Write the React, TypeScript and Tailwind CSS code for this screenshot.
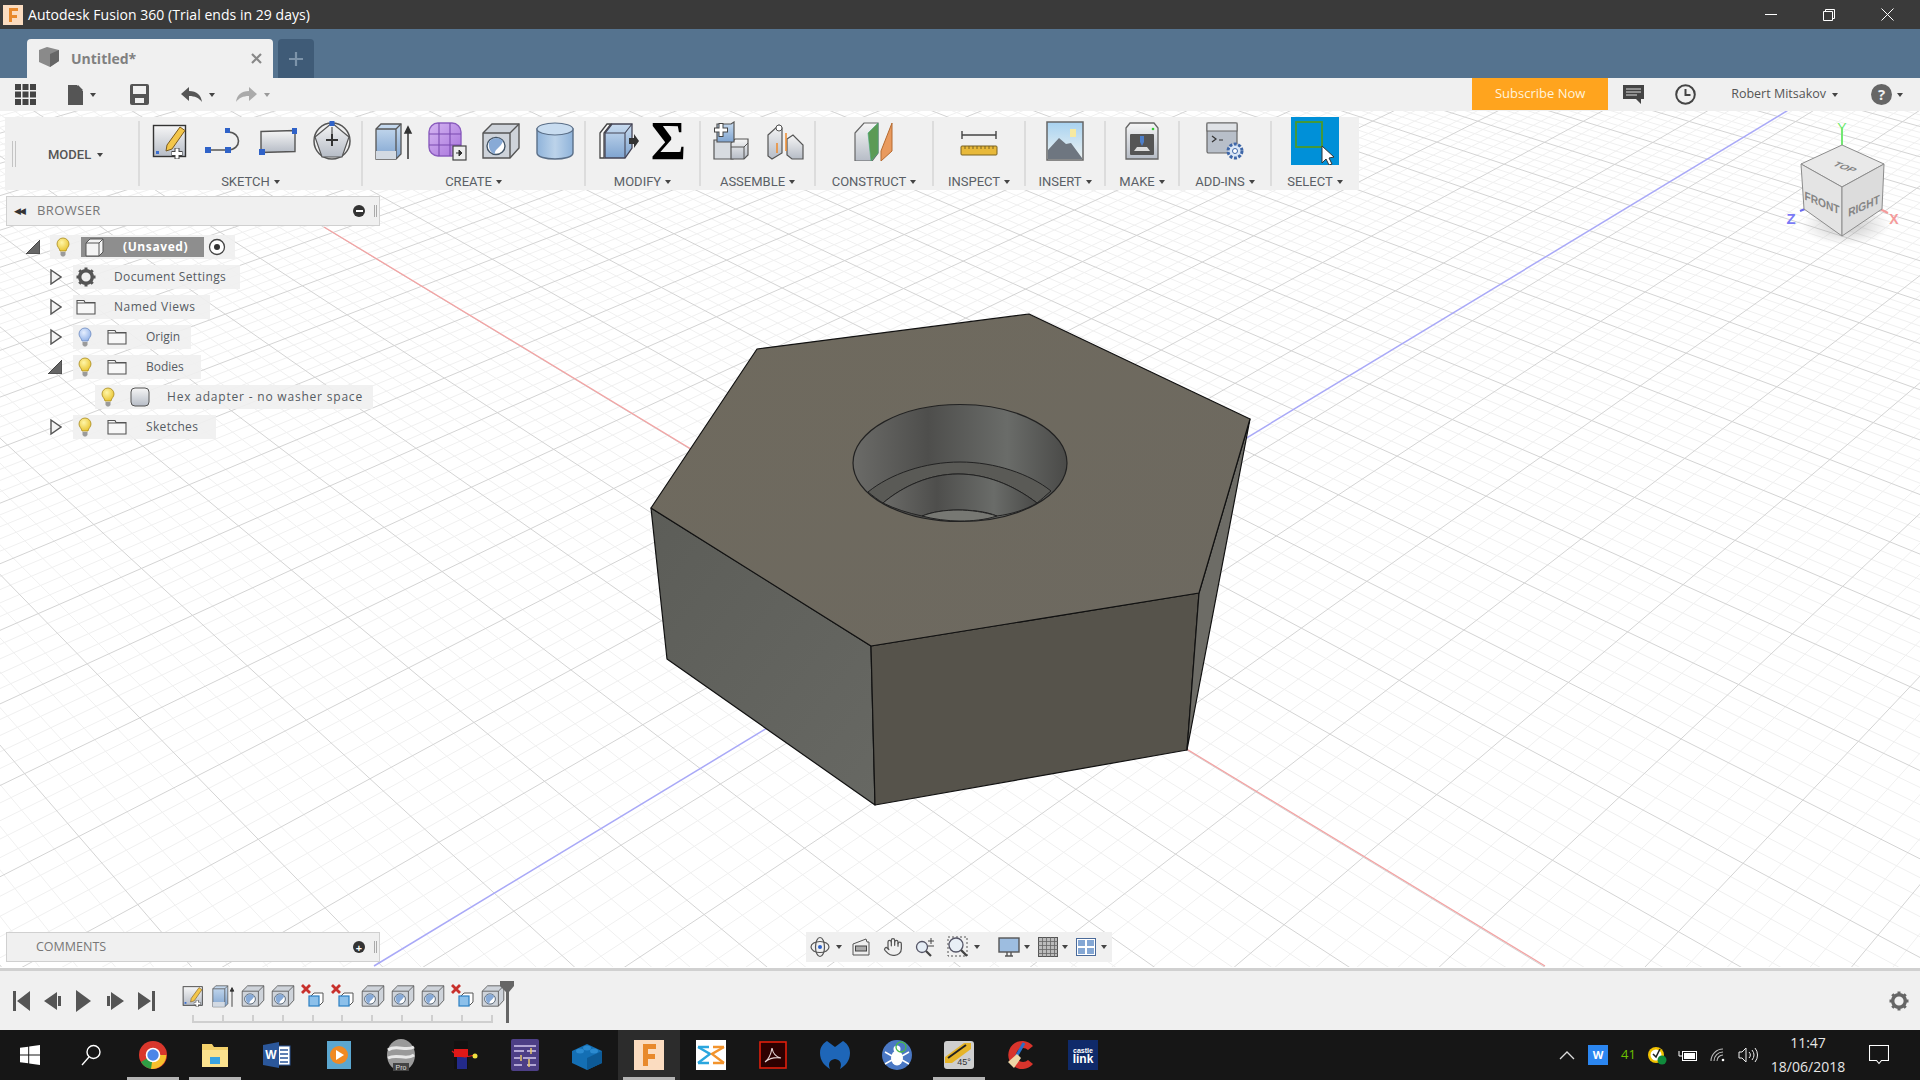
import { Hand } from "lucide-react";
import type { ReactNode } from "react";

// perspective grid: two pencils of lines through the vanishing points
const VPR = { x: -1295, y: -753 };
const VPB = { x: 3350, y: -835 };
const RED_O = { x: 955, y: 610 };
const L1 = { x: 471, y: 317 };

function gridLines() {
    const out: { d: string; major: boolean }[] = [];
    const far = (vp: { x: number; y: number }, x: number, y: number) => {
        const t = 40;
        return `M${vp.x} ${vp.y}L${vp.x + (x - vp.x) * t} ${vp.y + (y - vp.y) * t}`;
    };
    // blue direction, crossing the red axis
    for (let k = -150; k <= 300; k++) {
        const inv = 5.348e-4 + (k / 5) * 1.587e-5;
        if (inv <= 0.05e-4) continue;
        const x = VPR.x + 1 / inv;
        const y = VPR.y + ((RED_O.y - VPR.y) / (RED_O.x - VPR.x)) * (x - VPR.x);
        out.push({ d: far(VPB, x, y), major: k % 5 === 0 });
    }
    // red direction, crossing one known grid line
    for (let k = -50; k <= 300; k++) {
        const inv = 3.473e-4 + (k / 5) * 0.0885e-4;
        if (inv <= 0.05e-4) continue;
        const x = VPB.x - 1 / inv;
        const y = VPB.y + ((L1.y - VPB.y) / (L1.x - VPB.x)) * (x - VPB.x);
        out.push({ d: far(VPR, x, y), major: k % 5 === 0 });
    }
    return out;
}

const Caret = ({ c = "border-t-[#444]" }: { c?: string }) => (
    <span className={`inline-block h-0 w-0 border-x-[3.5px] border-t-[4px] border-x-transparent ${c}`} />
);

const Defs = () => (
    <svg className="absolute h-0 w-0">
        <defs>
            <linearGradient id="gBlue" x1="0" y1="0" x2="0" y2="1">
                <stop offset="0" stopColor="#c9dcf0" />
                <stop offset="1" stopColor="#7fa4d0" />
            </linearGradient>
            <linearGradient id="gBlueH" x1="0" y1="0" x2="1" y2="0">
                <stop offset="0" stopColor="#8fb3da" />
                <stop offset=".5" stopColor="#bcd3ea" />
                <stop offset="1" stopColor="#8fb3da" />
            </linearGradient>
            <linearGradient id="gGrey" x1="0" y1="0" x2="0" y2="1">
                <stop offset="0" stopColor="#f6f6f6" />
                <stop offset="1" stopColor="#b6bcc6" />
            </linearGradient>
            <linearGradient id="gPurple" x1="0" y1="0" x2="1" y2="1">
                <stop offset="0" stopColor="#d5b6f2" />
                <stop offset="1" stopColor="#a873dc" />
            </linearGradient>
            <radialGradient id="gBulb" cx=".4" cy=".35" r=".7">
                <stop offset="0" stopColor="#fff6a8" />
                <stop offset="1" stopColor="#e8c22c" />
            </radialGradient>
            <radialGradient id="gBulbB" cx=".4" cy=".35" r=".7">
                <stop offset="0" stopColor="#e6efff" />
                <stop offset="1" stopColor="#8fb0e8" />
            </radialGradient>
            <linearGradient id="gHole" x1="0" y1="0" x2="1" y2="0">
                <stop offset="0" stopColor="#6b6b68" />
                <stop offset=".35" stopColor="#4e4e4c" />
                <stop offset=".72" stopColor="#6a6c69" />
                <stop offset="1" stopColor="#4a4a48" />
            </linearGradient>
            <linearGradient id="gLeft" x1="0" y1="0" x2="1" y2="1">
                <stop offset="0" stopColor="#5c5d58" />
                <stop offset="1" stopColor="#676863" />
            </linearGradient>
            <linearGradient id="gTop" x1="0" y1="0" x2="1" y2="1">
                <stop offset="0" stopColor="#6f6a5e" />
                <stop offset="1" stopColor="#6d6960" />
            </linearGradient>
            <radialGradient id="gShadow">
                <stop offset="0" stopColor="#999" stopOpacity=".55" />
                <stop offset="1" stopColor="#999" stopOpacity="0" />
            </radialGradient>
            <linearGradient id="gSky" x1="0" y1="0" x2="0" y2="1">
                <stop offset="0" stopColor="#a8d2f0" />
                <stop offset="1" stopColor="#eef3f2" />
            </linearGradient>
        </defs>
    </svg>
);

const Ico = ({ s = 40, children }: { s?: number; children: ReactNode }) => (
    <svg width={s} height={s} viewBox="0 0 40 40" className="shrink-0">
        {children}
    </svg>
);

const SketchIcon = ({ s = 40 }: { s?: number }) => (
    <Ico s={s}>
        <rect x="3.5" y="4.5" width="32" height="31" fill="url(#gGrey)" stroke="#333" strokeWidth="1.4" />
        <rect x="6" y="30" width="3" height="3" fill="#3b6fd0" />
        <path d="M17 24L30 6l5 3.5L22 28l-6 2z" fill="#f3c64a" stroke="#7a5a20" strokeWidth="1" />
        <path d="M27 27v11M21.500 32.500h11" stroke="#444" strokeWidth="5" />
        <path d="M27 27.500v10M22 32.500h10" stroke="#fff" strokeWidth="3" />
    </Ico>
);
const ArcIcon = () => (
    <Ico>
        <path d="M4 29H24M24 11C38 11 38 29 24 29" fill="none" stroke="#555" strokeWidth="1.6" />
        <path d="M1 26h6v6H1zM21 26h6v6h-6zM21 7h5v5h-5z" fill="#2f62c8" />
    </Ico>
);
const RectIcon = () => (
    <Ico>
        <path d="M3 10.500L37 9.500V30.500L3 31.500z" fill="url(#gGrey)" stroke="#555" strokeWidth="1.4" />
        <path d="M34 7h5v6h-5zM1 28h6v6H1z" fill="#2f62c8" />
    </Ico>
);
const PolyIcon = () => (
    <Ico>
        <circle cx="20" cy="20" r="18" fill="none" stroke="#555" strokeWidth="1.5" />
        <path d="M20 2L37 16 30 36H10L3 16z" fill="url(#gGrey)" stroke="#555" strokeWidth="1.2" />
        <path d="M20 13v12M14 19h12" stroke="#333" strokeWidth="2" />
        <path d="M20 6V14" stroke="#333" strokeWidth="1" />
        <rect x="17.500" y="0" width="5" height="5" fill="#2f62c8" />
    </Ico>
);
const ExtrudeIcon = ({ s = 40, arrow = true }: { s?: number; arrow?: boolean }) => (
    <Ico s={s}>
        <path d="M3 8l5-5h20v30l-5 5H3z" fill="url(#gBlue)" stroke="#555" strokeWidth="1.3" />
        <path d="M3 8h20v30M23 8l5-5" fill="none" stroke="#555" strokeWidth="1.3" />
        <path d="M3 30h20v8H3z" fill="#d3dae3" stroke="none" />
        {arrow && <path d="M35 38V8M32 12l3-6 3 6z" stroke="#333" strokeWidth="1.5" fill="#333" />}
    </Ico>
);
const FormIcon = () => (
    <Ico>
        <rect x="2" y="2" width="32" height="33" rx="9" fill="url(#gPurple)" stroke="#8b5dbe" strokeWidth="1.4" />
        <path d="M2 13h32M2 24h32M12 2v33M23 2v33" stroke="#7a4bb0" strokeWidth="1.1" />
        <rect x="26" y="25" width="13" height="14" fill="#eee" stroke="#444" strokeWidth="1.2" />
        <path d="M29 32h4M32 29l3 3-3 3z" stroke="#333" fill="#333" />
    </Ico>
);
const HoleIcon = ({ s = 40 }: { s?: number }) => (
    <Ico s={s}>
        <path d="M2 12l9-9h27v24l-9 10H2z" fill="#ced3da" stroke="#555" strokeWidth="1.4" />
        <path d="M2 12h27v25M29 12l9-9" fill="none" stroke="#555" strokeWidth="1.4" />
        <ellipse cx="15" cy="25" rx="9" ry="8.500" fill="#fff" stroke="#456" strokeWidth="1.4" />
        <path d="M8 21a9 9 0 0114-1c-2 7-9 8-8 13-4-1-7-5-6-12z" fill="#88aad6" />
    </Ico>
);
const CylIcon = () => (
    <Ico>
        <path d="M2 8v24c0 8 36 8 36 0V8z" fill="url(#gBlueH)" stroke="#5b6f88" strokeWidth="1.4" />
        <ellipse cx="20" cy="8" rx="18" ry="6" fill="#c8dcf0" stroke="#5b6f88" strokeWidth="1.2" />
    </Ico>
);
const PressIcon = () => (
    <Ico>
        <path d="M1 12L8 3h4L5 12v25H1z" fill="#f8f8f8" stroke="#444" strokeWidth="1.3" />
        <path d="M6 12l7-9h20v24l-7 10H6z" fill="url(#gBlue)" stroke="#445" strokeWidth="1.3" />
        <path d="M6 12h20v25M26 12l7-9" fill="none" stroke="#445" strokeWidth="1.1" />
        <path d="M30 17h5v-4l5 7-5 7v-4h-5z" fill="#333" />
    </Ico>
);
const AssembleIcon = () => (
    <Ico>
        <path d="M3 19h15l4-3v22H3z" fill="#d7dbe0" stroke="#555" strokeWidth="1.2" />
        <path d="M20 22l4-4h13v16l-4 4H20z" fill="url(#gGrey)" stroke="#555" strokeWidth="1.2" />
        <path d="M20 26h13v12M33 26l4-4" fill="none" stroke="#555" />
        <path d="M6 3h14l3-2v20H6z" fill="url(#gBlue)" stroke="#555" strokeWidth="1.2" />
        <path d="M10 2v14M3 9h14" stroke="#444" strokeWidth="5" />
        <path d="M10 3v12M4 9h12" stroke="#fff" strokeWidth="3" />
    </Ico>
);
const JointIcon = () => (
    <Ico>
        <path d="M3 14l11-10 3 3v25l-10 6-4-3z" fill="url(#gGrey)" stroke="#555" strokeWidth="1.2" />
        <path d="M22 18l6-4 10 10v14H27l-5-4z" fill="url(#gGrey)" stroke="#555" strokeWidth="1.2" />
        <circle cx="14" cy="7" r="3" fill="#fff" stroke="#555" />
        <path d="M21 12v18M12 22v10" stroke="#ee8a2c" strokeWidth="1.5" />
    </Ico>
);
const ConstructIcon = () => (
    <Ico>
        <path d="M1 12l9-10h14v30l-6 8H1z" fill="url(#gGrey)" stroke="#666" strokeWidth="1.2" />
        <path d="M14 12L24 2v30l-7 8z" fill="#5c9a55" stroke="#4a7" strokeWidth=".6" />
        <path d="M27 30L38 2v28l-11 10z" fill="#e99a5e" stroke="#b56a30" strokeWidth="1" />
    </Ico>
);
const InspectIcon = () => (
    <Ico>
        <path d="M3 10v8M37 10v8M3 14h34" stroke="#444" strokeWidth="1.4" />
        <rect x="2" y="25" width="36" height="9" rx="1" fill="#e8b93a" stroke="#7a6320" />
        <path d="M6 25v3M10 25v3M14 25v3M18 25v3M22 25v3M26 25v3M30 25v3M34 25v3" stroke="#7a6320" />
    </Ico>
);
const InsertIcon = () => (
    <Ico>
        <rect x="2" y="1" width="36" height="38" fill="url(#gSky)" stroke="#666" strokeWidth="1.5" />
        <rect x="25" y="8" width="6" height="8" fill="#f6e9a0" />
        <path d="M3 38V29L14 17l7 6 5-1 11 15v1z" fill="#6e7680" />
    </Ico>
);
const MakeIcon = () => (
    <Ico>
        <path d="M4 7l4-5h24l4 5v31H4z" fill="url(#gGrey)" stroke="#666" strokeWidth="1.3" />
        <circle cx="31" cy="8" r="1.300" fill="#3c3" />
        <rect x="8" y="13" width="24" height="21" rx="1" fill="#555" />
        <path d="M18 15h4v6l-2 4-2-4z" fill="#4d7ec9" />
        <path d="M12 30l3-4h10l3 4z" fill="#ddd" />
    </Ico>
);
const AddinsIcon = () => (
    <Ico>
        <rect x="2" y="2" width="30" height="30" rx="1.500" fill="#b8bfc9" stroke="#666" strokeWidth="1.2" />
        <rect x="2" y="2" width="30" height="8" fill="#dfe2e6" stroke="#666" strokeWidth="1" />
        <path d="M7 15l4 3-4 3M14 19h4" fill="none" stroke="#333" strokeWidth="1.2" />
        <circle cx="30" cy="30" r="7" fill="#dbe7f6" stroke="#3f67a8" strokeWidth="3" strokeDasharray="3 1.500" />
        <circle cx="30" cy="30" r="2.500" fill="#fff" stroke="#3f67a8" />
    </Ico>
);
const SelectIcon = () => (
    <div className="h-[48px] w-[48px] bg-[#0090d8]">
        <svg width="48" height="48" viewBox="0 0 48 48">
            <rect x="5" y="5" width="26" height="25" fill="none" stroke="#4c9a2a" strokeWidth="1.8" />
            <path d="M31 29v17l4-4 3 6 3-1-3-6 5-1z" fill="#fff" stroke="#333" />
        </svg>
    </div>
);

const Group = ({ w, label, gap = "gap-[14px]", children }: { w: string; label: string; gap?: string; children: ReactNode }) => (
    <div className={`flex h-full flex-col items-center ${w}`}>
        <div className={`flex h-[47px] items-center justify-center ${gap}`}>{children}</div>
        <div className="mt-[10px] flex h-[16px] items-center gap-[4px] whitespace-nowrap text-[13px] text-[#5a5f66]">
            {label} <Caret />
        </div>
    </div>
);
const Sep = () => <div className="my-[4px] w-[2px] shrink-0 bg-[#dcdcdc]" />;

const Wedge = ({ open }: { open?: boolean }) =>
    open ? (
        <svg width="14" height="14" viewBox="0 0 14 14" className="shrink-0">
            <path d="M0 14L14 0V14z" fill="#666" stroke="#444" />
        </svg>
    ) : (
        <svg width="12" height="16" viewBox="0 0 12 16" className="shrink-0">
            <path d="M1 1L11 8 1 15z" fill="#f4f4f4" stroke="#555" strokeWidth="1.4" />
        </svg>
    );
const Bulb = ({ blue }: { blue?: boolean }) => (
    <svg width="14" height="20" viewBox="0 0 14 20" className="shrink-0">
        <path d="M7 1a6 6 0 00-6 6c0 3 2.500 4 3 7h6c.5-3 3-4 3-7a6 6 0 00-6-6z" fill={blue ? "url(#gBulbB)" : "url(#gBulb)"} stroke={blue ? "#6c8ac0" : "#a88a20"} strokeWidth=".8" />
        <path d="M4.500 15h5v3l-1.500 1.500h-2L4.500 18z" fill="#9a9a9a" />
    </svg>
);
const Folder = () => (
    <svg width="20" height="16" viewBox="0 0 20 16" className="shrink-0">
        <path d="M1 15V1.500h7l1 2h10V15z" fill="#f7f7f7" stroke="#555" strokeWidth="1.100" />
        <path d="M1 4h18" stroke="#555" />
    </svg>
);
const Gear = ({ s = 20, c = "#555" }: { s?: number; c?: string }) => (
    <svg width={s} height={s} viewBox="0 0 20 20" className="shrink-0">
        <circle cx="10" cy="10" r="6.300" fill="none" stroke={c} strokeWidth="3.400" />
        <path d="M10 .5v4M10 15.500v4M.5 10h4M15.500 10h4M3.300 3.300l2.800 2.800M13.900 13.900l2.800 2.800M16.700 3.300l-2.800 2.800M6.100 13.900l-2.800 2.800" stroke={c} strokeWidth="3" />
    </svg>
);
const RowText = ({ children, ml }: { children: ReactNode; ml: string }) => (
    <span className={`whitespace-nowrap text-[12px] text-[#555b62] ${ml}`}>{children}</span>
);

const Browser = () => (
    <div className="absolute left-[6px] top-[85px] w-[374px] font-['Open_Sans',sans-serif]">
        <div className="flex h-[30px] items-center border border-[#d0d0d0] bg-[#f0f0f0] pl-[7px]">
            <span className="w-[23px] text-[9px] tracking-[-2px] text-[#333]">◀◀</span>
            <span className="text-[13px] tracking-[.4px] text-[#777]">BROWSER</span>
            <span className="ml-auto mr-[9px] flex h-[12px] w-[12px] items-center justify-center rounded-full bg-[#333]">
                <span className="h-[2px] w-[7px] bg-white" />
            </span>
            <span className="mr-[2px] h-[12px] w-[3px] border-x border-[#aaa]" />
        </div>
        <div className="mt-[6px] flex flex-col">
            <div className="flex h-[30px] items-center pl-[20px]">
                <Wedge open />
                <div className="ml-[10px] flex h-[24px] w-[185px] items-center bg-[#f0f0f0]/90">
                    <span className="ml-[6px]"><Bulb /></span>
                    <div className="ml-[11px] flex h-[20px] w-[123px] items-center bg-[#8e8e8e] pl-[4px] font-bold text-white">
                        <svg width="20" height="20" viewBox="0 0 20 20" className="shrink-0">
                            <path d="M1 6l4-4h13v13l-4 4H1z" fill="#f4f4f4" stroke="#555" />
                            <path d="M1 6h13v13M14 6l4-4" fill="none" stroke="#555" />
                        </svg>
                        <span className="ml-[18px] text-[12px] tracking-[.6px]">(Unsaved)</span>
                    </div>
                    <svg width="18" height="18" viewBox="0 0 18 18" className="ml-[4px]">
                        <circle cx="9" cy="9" r="7.500" fill="#fff" stroke="#444" strokeWidth="1.300" />
                        <circle cx="9" cy="9" r="3" fill="#333" />
                    </svg>
                </div>
            </div>
            <div className="flex h-[30px] items-center pl-[44px]">
                <Wedge />
                <div className="ml-[11px] flex h-[24px] w-[167px] items-center bg-[#f0f0f0]/90 pl-[3px]">
                    <Gear />
                    <RowText ml="ml-[18px] tracking-[.35px]">Document Settings</RowText>
                </div>
            </div>
            <div className="flex h-[30px] items-center pl-[44px]">
                <Wedge />
                <div className="ml-[11px] flex h-[24px] w-[137px] items-center bg-[#f0f0f0]/90 pl-[3px]">
                    <Folder />
                    <RowText ml="ml-[18px] tracking-[.5px]">Named Views</RowText>
                </div>
            </div>
            <div className="flex h-[30px] items-center pl-[44px]">
                <Wedge />
                <div className="ml-[11px] flex h-[24px] w-[118px] items-center bg-[#f0f0f0]/90 pl-[5px]">
                    <Bulb blue />
                    <span className="ml-[15px]"><Folder /></span>
                    <RowText ml="ml-[19px]">Origin</RowText>
                </div>
            </div>
            <div className="flex h-[30px] items-center pl-[42px]">
                <Wedge open />
                <div className="ml-[11px] flex h-[24px] w-[128px] items-center bg-[#f0f0f0]/90 pl-[5px]">
                    <Bulb />
                    <span className="ml-[15px]"><Folder /></span>
                    <RowText ml="ml-[19px]">Bodies</RowText>
                </div>
            </div>
            <div className="flex h-[30px] items-center pl-[89px]">
                <div className="flex h-[24px] w-[278px] items-center bg-[#f0f0f0]/90 pl-[6px]">
                    <Bulb />
                    <svg width="20" height="20" viewBox="0 0 20 20" className="ml-[15px] shrink-0">
                        <rect x="1" y="1" width="18" height="18" rx="4" fill="url(#gGrey)" stroke="#555" />
                    </svg>
                    <RowText ml="ml-[17px] tracking-[.8px]">Hex adapter - no washer space</RowText>
                </div>
            </div>
            <div className="flex h-[30px] items-center pl-[44px]">
                <Wedge />
                <div className="ml-[11px] flex h-[24px] w-[143px] items-center bg-[#f0f0f0]/90 pl-[5px]">
                    <Bulb />
                    <span className="ml-[15px]"><Folder /></span>
                    <RowText ml="ml-[19px] tracking-[.35px]">Sketches</RowText>
                </div>
            </div>
        </div>
    </div>
);

const Canvas = () => {
    const lines = gridLines();
    return (
        <svg className="absolute inset-0" width="1920" height="856" viewBox="0 112 1920 856">
            <rect x="0" y="112" width="1920" height="856" fill="#fff" />
            <g fill="none" strokeWidth="1">
                {lines.filter((l) => !l.major).map((l, i) => <path key={i} d={l.d} stroke="#f0f0f0" />)}
                {lines.filter((l) => l.major).map((l, i) => <path key={i} d={l.d} stroke="#d4d4d4" />)}
            </g>
            <path d="M324 228L1545 967" stroke="#f3a3a3" strokeWidth="1.300" />
            <path d="M1790 110L374 967" stroke="#a9a9f7" strokeWidth="1.500" />
            {/* hex body */}
            <g strokeLinejoin="round">
                <path d="M651 509L871 647 875 806 667 660z" fill="url(#gLeft)" stroke="#111" strokeWidth="1.200" />
                <path d="M871 647L1199 594 1187 751 875 806z" fill="#56534b" stroke="#111" strokeWidth="1.200" />
                <path d="M1250 420L1199 594 1187 751z" fill="#6d6c66" stroke="#111" strokeWidth="1.200" />
                <path d="M757 350L1029 315 1250 420 1199 594 871 647 651 509z" fill="url(#gTop)" stroke="#111" strokeWidth="1.200" />
                <ellipse cx="960" cy="464" rx="107" ry="58.500" fill="url(#gHole)" stroke="#222" strokeWidth="1.200" />
                <path d="M868 493C890 475 925 463 960 463 995 463 1030 475 1051 492 1045 497 1042 500 1037 504 1012 485 985 475 958 475 930 475 903 487 883 504 878 501 873 497 868 493z" fill="#5a5a56" stroke="#222" />
                <path d="M883 504C903 487 930 475 958 475 985 475 1012 485 1037 504 1025 511 1012 515 997 517 985 512 970 511 958 511 945 511 932 513 922 517 908 514 895 510 883 504z" fill="url(#gHole)" stroke="#222" />
                <path d="M922 517C932 513 945 511 958 511 970 511 985 513 997 517 985 521 972 522 960 522 947 522 933 520 922 517z" fill="#777873" stroke="#222" />
            </g>
            {/* view cube */}
            <ellipse cx="1846" cy="226" rx="44" ry="20" fill="url(#gShadow)" />
            <path d="M1842 128V146" stroke="#74e874" strokeWidth="2" />
            <text x="1842" y="134" textAnchor="middle" fontSize="14" fill="#74e874" fontFamily="Liberation Sans">Y</text>
            <path d="M1800 212l5-2" stroke="#6a6af0" strokeWidth="2" />
            <text x="1791" y="225" textAnchor="middle" fontSize="15" fontWeight="bold" fill="#7a7af5" fontFamily="Liberation Sans">Z</text>
            <path d="M1880 210l8 4" stroke="#f59a9a" strokeWidth="2" />
            <text x="1894" y="225" textAnchor="middle" fontSize="14" fontWeight="bold" fill="#f59a9a" fontFamily="Liberation Sans">X</text>
            <g stroke="#8c8c8c" strokeWidth="1">
                <path d="M1842 146L1884 165 1842 188 1801 165z" fill="#e9e9e9" />
                <path d="M1801 165L1842 188V237L1804 210z" fill="#e4e4e4" />
                <path d="M1884 165L1842 188V237L1882 210z" fill="#dcdcdc" />
            </g>
            <g fontFamily="Liberation Sans" fontSize="12" fontWeight="bold" fill="#858585" textAnchor="middle">
                <text transform="matrix(.85 .3 -.7 .45 1842 170)">TOP</text>
                <text transform="matrix(.85 .36 0 1 1822 208)">FRONT</text>
                <text transform="matrix(.85 -.38 0 1 1864 211)">RIGHT</text>
            </g>
        </svg>
    );
};

const Ribbon = () => (
    <div className="absolute left-[5px] top-[6px] flex h-[73px] w-[1354px] bg-[#f0f0f0] font-['Roboto',sans-serif]">
        <div className="flex w-[133px] items-center">
            <span className="ml-[7px] h-[26px] w-[4px] border-x border-[#c4c4c4]" />
            <span className="ml-[32px] mt-[2px] flex items-center gap-[6px] text-[13px] font-medium text-[#555]">
                MODEL <Caret />
            </span>
        </div>
        <Sep />
        <Group w="w-[221px]" label="SKETCH">
            <SketchIcon />
            <ArcIcon />
            <RectIcon />
            <PolyIcon />
        </Group>
        <Sep />
        <Group w="w-[221px]" label="CREATE">
            <ExtrudeIcon />
            <FormIcon />
            <HoleIcon />
            <CylIcon />
        </Group>
        <Sep />
        <Group w="w-[113px]" label="MODIFY" gap="gap-[12px]">
            <PressIcon />
            <span className="flex h-[44px] w-[36px] items-center justify-center font-['Liberation_Serif',serif] text-[54px] font-bold leading-[44px] text-black">Σ</span>
        </Group>
        <Sep />
        <Group w="w-[113px]" label="ASSEMBLE">
            <AssembleIcon />
            <JointIcon />
        </Group>
        <Sep />
        <Group w="w-[116px]" label="CONSTRUCT">
            <ConstructIcon />
        </Group>
        <Sep />
        <Group w="w-[90px]" label="INSPECT">
            <InspectIcon />
        </Group>
        <Sep />
        <Group w="w-[78px]" label="INSERT">
            <InsertIcon />
        </Group>
        <Sep />
        <Group w="w-[72px]" label="MAKE">
            <MakeIcon />
        </Group>
        <Sep />
        <Group w="w-[90px]" label="ADD-INS">
            <AddinsIcon />
        </Group>
        <Sep />
        <Group w="w-[86px]" label="SELECT">
            <SelectIcon />
        </Group>
    </div>
);

const NavBar = () => (
    <div className="absolute left-[806px] top-[821px] flex h-[30px] w-[306px] items-center bg-[#f0f0f0] pl-[4px]">
        <svg width="20" height="22" viewBox="0 0 20 22" className="shrink-0">
            <ellipse cx="10" cy="11" rx="9" ry="5.500" fill="none" stroke="#555" strokeWidth="1.200" />
            <ellipse cx="10" cy="11" rx="4.500" ry="9.500" fill="none" stroke="#555" strokeWidth="1.200" />
            <circle cx="10" cy="11" r="2" fill="#2f62c8" />
        </svg>
        <span className="ml-[6px] flex"><Caret /></span>
        <svg width="20" height="20" viewBox="0 0 20 20" className="ml-[9px] shrink-0">
            <path d="M2 7l13-5 1 3H18v13H2z" fill="#eee" stroke="#555" />
            <rect x="4.500" y="9" width="11" height="5" fill="#aaa" stroke="#444" />
        </svg>
        <Hand size={20} className="ml-[12px] shrink-0 text-[#555]" strokeWidth={1.5} />
        <svg width="20" height="20" viewBox="0 0 20 20" className="ml-[12px] shrink-0">
            <circle cx="7" cy="10" r="5.500" fill="#e6eef6" stroke="#556" strokeWidth="1.300" />
            <path d="M11 14l5 5" stroke="#444" strokeWidth="2.200" />
            <path d="M16 1v6M13 4h6M13 9h6" stroke="#444" />
        </svg>
        <svg width="22" height="22" viewBox="0 0 22 22" className="ml-[12px] shrink-0">
            <rect x="1" y="1" width="19" height="19" fill="none" stroke="#555" strokeDasharray="2 2" />
            <circle cx="9" cy="9" r="7" fill="#e8eff6" stroke="#556" strokeWidth="1.300" />
            <path d="M14 14l6 6" stroke="#444" strokeWidth="2.400" />
        </svg>
        <span className="ml-[5px] flex"><Caret /></span>
        <svg width="22" height="20" viewBox="0 0 22 20" className="ml-[18px] shrink-0">
            <rect x="1" y="1" width="20" height="14" fill="#9dbde0" stroke="#555" strokeWidth="1.400" />
            <path d="M7 19h8M9 15v4M13 15v4" stroke="#555" strokeWidth="1.400" />
        </svg>
        <span className="ml-[4px] flex"><Caret /></span>
        <svg width="20" height="20" viewBox="0 0 20 20" className="ml-[8px] shrink-0">
            <rect x="0.500" y="0.500" width="19" height="19" fill="#bbb" stroke="#555" />
            <path d="M4.500 0v20M8.500 0v20M12.500 0v20M16.500 0v20M0 4.500h20M0 8.500h20M0 12.500h20M0 16.500h20" stroke="#666" strokeWidth=".8" />
        </svg>
        <span className="ml-[4px] flex"><Caret /></span>
        <svg width="20" height="18" viewBox="0 0 20 18" className="ml-[8px] shrink-0">
            <rect x="0.500" y="0.500" width="19" height="17" fill="#fff" stroke="#4a6a9a" />
            <path d="M2 2h7v6H2zM11 2h7v6h-7zM2 10h7v6H2zM11 10h7v6h-7z" fill="#84a7d4" />
        </svg>
        <span className="ml-[5px] flex"><Caret /></span>
    </div>
);

const TlCombine = () => (
    <svg width="24" height="24" viewBox="0 0 24 24" className="shrink-0">
        <path d="M1 1l8 8M9 1L1 9" stroke="#c8302c" strokeWidth="2.800" />
        <path d="M10 12l3-3h9v9l-3 3h-9z" fill="#fff" stroke="#555" />
        <rect x="8" y="12" width="10" height="10" fill="#8cc0ea" stroke="#2b7fc2" strokeWidth="1.200" />
    </svg>
);

const Timeline = () => (
    <div className="relative flex h-[62px] shrink-0 items-center border-t-[3px] border-[#d0d0d0] bg-[#f0f0f0] pl-[12px]">
        <svg width="148" height="22" viewBox="0 0 148 22" className="shrink-0">
            <path d="M1 1h3v20H1zM18 1v20L5 11z" fill="#555" />
            <path d="M45 2v18L32 11zM46 6h3v10h-3z" fill="#555" />
            <path d="M64 0v22L79 11z" fill="#555" />
            <path d="M95 6h3v10h-3zM99 2v18l13-9z" fill="#555" />
            <path d="M126 2v18l13-9zM140 1h3v20h-3z" fill="#555" />
        </svg>
        <div className="ml-[21px] flex items-center gap-[6px] pb-[10px]">
            <span className="flex h-[24px] w-[24px] items-center justify-center"><SketchIcon s={24} /></span>
            <ExtrudeIcon s={24} />
            <HoleIcon s={24} />
            <HoleIcon s={24} />
            <TlCombine />
            <TlCombine />
            <HoleIcon s={24} />
            <HoleIcon s={24} />
            <HoleIcon s={24} />
            <TlCombine />
            <HoleIcon s={24} />
        </div>
        {/* timeline bracket and marker lie over the strip */}
        <div className="absolute left-[192px] top-[47px] flex h-[5px] w-[301px] justify-between border-b-[2px] border-[#cfcfcf]">
            {Array.from({ length: 11 }).map((_, i) => (
                <span key={i} className="h-[7px] w-[2px] -translate-y-[3px] bg-[#cfcfcf]" />
            ))}
        </div>
        <svg width="14" height="42" viewBox="0 0 14 42" className="absolute left-[500px] top-[10px]">
            <path d="M0 0h14v5l-5 6v31H6V11L0 5z" fill="#666" />
        </svg>
        <span className="ml-auto mr-[11px]"><Gear c="#666" /></span>
    </div>
);

const ChromeIcon = () => (
    <svg width="28" height="28" viewBox="0 0 28 28">
        <circle cx="14" cy="14" r="14" fill="#d9372c" />
        <path d="M14 14L2 21 A14 14 0 0 0 14 28 L22 14z" fill="#2f9e44" />
        <path d="M14 14h13.300A14 14 0 0 1 12 27.900z" fill="#f6c02c" />
        <circle cx="14" cy="14" r="6.500" fill="#4a86e8" stroke="#fff" strokeWidth="1.600" />
    </svg>
);
const tbar = [
    { id: "chrome", bar: true, el: <ChromeIcon /> },
    { id: "folder", bar: true, el: (
        <svg width="28" height="26" viewBox="0 0 28 26">
            <path d="M1 2h10l2 3h14v20H1z" fill="#f3d06a" />
            <path d="M1 8h26v17H1z" fill="#fbe28e" />
            <path d="M9 15h10v7H9z" fill="#3aa3e0" />
        </svg>
    ) },
    { id: "word", el: (
        <svg width="28" height="28" viewBox="0 0 28 28">
            <rect x="8" y="5" width="19" height="19" fill="#fff" stroke="#2b579a" />
            <path d="M17 9h8M17 13h8M17 17h8M17 21h8" stroke="#2b579a" strokeWidth="1.500" />
            <path d="M0 4L16 1v26L0 24z" fill="#2b579a" />
            <text x="8" y="18" textAnchor="middle" fontSize="12" fontWeight="bold" fill="#fff" fontFamily="Liberation Sans">W</text>
        </svg>
    ) },
    { id: "media", el: (
        <svg width="26" height="30" viewBox="0 0 26 30">
            <path d="M1 1h24v28H1z" fill="#5ba7d0" />
            <circle cx="13" cy="15" r="9" fill="#f08a24" />
            <path d="M10 10v10l8-5z" fill="#fff" />
        </svg>
    ) },
    { id: "earth", el: (
        <svg width="28" height="32" viewBox="0 0 28 32">
            <ellipse cx="14" cy="16" rx="14" ry="16" fill="#9a9a9a" />
            <path d="M1 11c8-6 18 2 26-3M1 19c10-5 18 3 26-3" stroke="#e8e8e8" strokeWidth="3" fill="none" />
            <rect x="6" y="24" width="16" height="8" fill="#444" />
            <text x="14" y="31" textAnchor="middle" fontSize="7" fill="#ddd" fontFamily="Liberation Sans">Pro</text>
        </svg>
    ) },
    { id: "x", el: (
        <svg width="30" height="32" viewBox="0 0 30 32">
            <path d="M6 2h14v28H6z" fill="#111" />
            <path d="M6 10h14v8H6z" fill="#e01818" />
            <path d="M9 18h10v12H9z" fill="#232a8a" />
            <path d="M4 12c8 8 16 6 23 4" fill="none" stroke="#e01818" strokeWidth="1.200" />
            <circle cx="27" cy="17" r="2.500" fill="#f0e040" />
        </svg>
    ) },
    { id: "eq", el: (
        <svg width="28" height="32" viewBox="0 0 28 32">
            <rect width="28" height="32" rx="2" fill="#4d3f86" />
            <path d="M3 7h22M3 12h10M16 12h9M3 19h6M12 19h13M3 26h8M16 26h9" stroke="#d4c9ee" strokeWidth="1.500" />
            <path d="M20 9v6M10 16v6M18 20v8" stroke="#e8c86a" strokeWidth="1.500" />
        </svg>
    ) },
    { id: "lego", el: (
        <svg width="30" height="30" viewBox="0 0 30 30">
            <path d="M15 4L30 11v12L15 30 0 23V11z" fill="#146fb4" />
            <path d="M15 18L30 11v12L15 30z" fill="#0d5a96" />
            <ellipse cx="15" cy="8" rx="4" ry="2.500" fill="#2b8ad0" />
            <ellipse cx="8" cy="11" rx="4" ry="2.500" fill="#2b8ad0" />
            <ellipse cx="22" cy="11" rx="4" ry="2.500" fill="#2b8ad0" />
        </svg>
    ) },
    { id: "fusion", active: true, el: (
        <svg width="30" height="30" viewBox="0 0 30 30">
            <rect width="30" height="30" fill="#fbdcc0" />
            <path d="M9 4h13v5h-8v5h7v5h-7v7H9z" fill="#e8892c" />
        </svg>
    ) },
    { id: "zoho", el: (
        <svg width="30" height="30" viewBox="0 0 30 30">
            <rect width="30" height="30" fill="#fff" />
            <path d="M2 7l12 7-12 9" fill="none" stroke="#2aa6de" strokeWidth="2.400" />
            <path d="M28 7l-12 7 12 9" fill="none" stroke="#f2932c" strokeWidth="2.400" />
            <path d="M2 7h11M2 23h11" stroke="#2aa6de" strokeWidth="2.400" />
            <path d="M17 7h11M17 23h11" stroke="#f2932c" strokeWidth="2.400" />
        </svg>
    ) },
    { id: "acrobat", el: (
        <svg width="28" height="28" viewBox="0 0 28 28">
            <rect x="1" y="1" width="26" height="26" fill="#2d0000" stroke="#e01e0c" strokeWidth="1.600" />
            <path d="M6 21c4-3 6-8 7-14 1 6 4 9 9 10-6-1-11 0-16 4z" fill="none" stroke="#e8d8d8" strokeWidth="1.100" />
        </svg>
    ) },
    { id: "malware", el: (
        <svg width="30" height="28" viewBox="0 0 30 28">
            <path d="M0 12C0 5 4 2 7 0l8 6 8-6c3 2 7 5 7 12 0 8-5 13-10 16 2-5 1-9-5-10-6 1-7 5-5 10C5 25 0 20 0 12z" fill="#1e66b8" />
        </svg>
    ) },
    { id: "bug", el: (
        <svg width="30" height="30" viewBox="0 0 30 30">
            <circle cx="15" cy="15" r="15" fill="#4a78c4" />
            <ellipse cx="15" cy="18" rx="6" ry="7.500" fill="#fff" />
            <circle cx="15" cy="9" r="3.500" fill="#fff" />
            <path d="M3 12l7 4M27 12l-7 4M3 24l7-4M27 24l-7-4" stroke="#fff" strokeWidth="1.500" />
            <circle cx="19" cy="7" r="5" fill="none" stroke="#49b84a" strokeWidth="1.300" />
        </svg>
    ) },
    { id: "temp", bar2: true, el: (
        <svg width="30" height="28" viewBox="0 0 30 28">
            <rect width="30" height="28" rx="3" fill="#cfcfcf" />
            <path d="M1 16L20 2h7v6L8 22H1z" fill="#e6b428" />
            <path d="M4 17L22 4" stroke="#222" strokeWidth="2" />
            <text x="20" y="24" textAnchor="middle" fontSize="9" fill="#333" fontFamily="Liberation Sans">45°</text>
        </svg>
    ) },
    { id: "ccleaner", el: (
        <svg width="30" height="30" viewBox="0 0 30 30">
            <path d="M27 6a14 14 0 100 18l-5-4a7 7 0 110-10z" fill="#d8342c" />
            <path d="M18 3L10 17" stroke="#2a6fc8" strokeWidth="3" />
            <path d="M11 14l-9 8 6 6 7-10z" fill="#eed7a8" />
        </svg>
    ) },
    { id: "castle", el: (
        <div className="flex h-[30px] w-[30px] flex-col items-center justify-center bg-[#0f2a6a] font-['Liberation_Sans',sans-serif] font-bold leading-[9px] text-white">
            <span className="text-[7px]">castle</span>
            <span className="text-[12px]">link</span>
        </div>
    ) },
];

const Taskbar = () => (
    <div className="flex h-[50px] shrink-0 bg-[#161616] text-white">
        <div className="flex w-[60px] items-center justify-center">
            <svg width="20" height="20" viewBox="0 0 20 20">
                <path d="M0 2.800L8.200 1.700V9.500H0zM9.200 1.500L20 0V9.500H9.200zM0 10.500H8.200V18.300L0 17.200zM9.200 10.500H20V20L9.200 18.500z" fill="#fff" />
            </svg>
        </div>
        <div className="flex w-[62px] items-center justify-center">
            <svg width="20" height="22" viewBox="0 0 20 22" fill="none" stroke="#fff" strokeWidth="1.400">
                <circle cx="12.500" cy="8" r="6.500" />
                <path d="M8 13L1 21" />
            </svg>
        </div>
        {tbar.map((t) => (
            <div key={t.id} className={`relative flex h-full w-[62px] shrink-0 items-center justify-center ${t.active ? "bg-[#2c2c2c]" : ""}`}>
                {t.el}
                {(t.bar || t.active || t.bar2) && <span className="absolute inset-x-[5px] bottom-0 h-[3px] bg-[#b4b4b4]" />}
            </div>
        ))}
        <div className="ml-auto flex items-center pr-[31px]">
            <svg width="16" height="10" viewBox="0 0 16 10" fill="none" stroke="#ddd" strokeWidth="1.300"><path d="M1 9l7-7 7 7" /></svg>
            <span className="ml-[13px] flex h-[20px] w-[20px] items-center justify-center bg-[#2b86f0] text-[11px] font-bold">W</span>
            <span className="ml-[13px] w-[14px] text-[13px] text-[#6cc000]">41</span>
            <svg width="20" height="20" viewBox="0 0 20 20" className="ml-[12px]">
                <circle cx="9" cy="10" r="8" fill="#f2c200" />
                <circle cx="9" cy="10" r="5.500" fill="#fff" />
                <path d="M6 9l3 3 4-8" fill="none" stroke="#222" strokeWidth="1.600" />
                <circle cx="15" cy="15" r="4.500" fill="#108a3c" />
            </svg>
            <svg width="20" height="14" viewBox="0 0 20 14" fill="none" stroke="#fff" className="ml-[11px]">
                <rect x="4.500" y="3.500" width="14" height="9" />
                <rect x="6" y="5" width="11" height="6" fill="#fff" stroke="none" />
                <path d="M1 3v5h3" />
            </svg>
            <svg width="16" height="14" viewBox="0 0 16 14" fill="none" stroke="#bbb" strokeWidth="1.100" className="ml-[12px]">
                <path d="M1 13A12 12 0 0113 1M4 13A9 9 0 0113 4M7 13A6 6 0 0113 7" />
                <circle cx="13" cy="12" r="1.300" fill="#fff" stroke="none" />
            </svg>
            <svg width="21" height="16" viewBox="0 0 21 16" fill="none" stroke="#eee" strokeWidth="1" className="ml-[12px]">
                <path d="M1 5h3l4-4v14l-4-4H1z" />
                <path d="M11 5a4 4 0 010 6M14 3a8 8 0 010 10M17 1a11 11 0 010 14" />
            </svg>
            <div className="ml-[10px] flex w-[78px] flex-col items-center text-[14px] leading-[24px] text-[#e6e6e6]">
                <span>11:47</span>
                <span>18/06/2018</span>
            </div>
            <svg width="20" height="20" viewBox="0 0 20 20" fill="none" stroke="#fff" strokeWidth="1.100" className="ml-[22px]">
                <path d="M.5.5h19v15h-7l-2.500 3-2.500-3h-7z" />
            </svg>
        </div>
    </div>
);

export default function App() {
    return (
        <div className="flex h-[1080px] w-[1920px] flex-col overflow-hidden font-['Open_Sans',sans-serif]">
            <Defs />
            <div className="flex h-[29px] shrink-0 items-center bg-[#3a3a3a] pl-[3px] text-white">
                <svg width="20" height="20" viewBox="0 0 20 20" className="shrink-0">
                    <rect width="20" height="20" fill="#fbdcc0" />
                    <path d="M6 3h9v3H9v4h5v3H9v4H6z" fill="#e8892c" />
                </svg>
                <span className="ml-[5px] text-[14px] tracking-[.04px]">Autodesk Fusion 360 (Trial ends in 29 days)</span>
                <div className="ml-auto flex items-center">
                    <span className="h-px w-[12px] bg-white" />
                    <svg width="12" height="12" viewBox="0 0 12 12" fill="none" stroke="#fff" className="ml-[46px]">
                        <path d="M.5 2.500h9v9h-9zM2.500 2.500v-2h9v9h-2" />
                    </svg>
                    <svg width="13" height="13" viewBox="0 0 13 13" stroke="#fff" className="ml-[46px] mr-[26px]">
                        <path d="M.5.5l12 12M12.500.5l-12 12" />
                    </svg>
                </div>
            </div>
            <div className="flex h-[49px] shrink-0 items-end bg-[#55738f] pl-[27px]">
                <div className="flex h-[39px] w-[246px] items-center rounded-t-[4px] bg-[#f0f0f0] pl-[11px]">
                    <svg width="22" height="22" viewBox="0 0 22 22" className="mb-[4px] shrink-0">
                        <path d="M1 4l8-3 12 3v11l-9 6-11-5z" fill="#8a8a8a" />
                        <path d="M12 8l9-4v11l-9 6z" fill="#666" />
                    </svg>
                    <span className="ml-[11px] text-[14px] font-bold text-[#808080]">Untitled*</span>
                    <svg width="11" height="11" viewBox="0 0 11 11" stroke="#888" strokeWidth="2.200" className="ml-auto mr-[11px]">
                        <path d="M1 1l9 9M10 1l-9 9" />
                    </svg>
                </div>
                <div className="ml-[5px] flex h-[39px] w-[36px] items-center justify-center rounded-t-[4px] bg-[#3f5b77]">
                    <svg width="14" height="14" viewBox="0 0 14 14" stroke="#7d94aa" strokeWidth="2.200">
                        <path d="M7 0v14M0 7h14" />
                    </svg>
                </div>
            </div>
            <div className="flex h-[33px] shrink-0 items-center bg-[#f0f0f0] pl-[15px]">
                <svg width="21" height="21" viewBox="0 0 21 21" fill="#444" className="shrink-0">
                    <path d="M0 0h6v6H0zM7.500 0h6v6h-6zM15 0h6v6h-6zM0 7.500h6v6H0zM7.500 7.500h6v6h-6zM15 7.500h6v6h-6zM0 15h6v6H0zM7.500 15h6v6h-6zM15 15h6v6h-6z" />
                </svg>
                <svg width="15" height="20" viewBox="0 0 15 20" fill="#555" className="ml-[32px] shrink-0">
                    <path d="M0 0h9l6 6v14H0zM10 0l5 5h-5z" />
                </svg>
                <span className="ml-[7px] flex"><Caret /></span>
                <svg width="19" height="21" viewBox="0 0 19 21" className="ml-[34px] shrink-0">
                    <path d="M0 2a2 2 0 012-2h15a2 2 0 012 2v17a2 2 0 01-2 2H2a2 2 0 01-2-2z" fill="#555" />
                    <rect x="3" y="2" width="13" height="8" fill="#f0f0f0" />
                    <rect x="5" y="14" width="9" height="5" fill="#f0f0f0" />
                </svg>
                <svg width="21" height="15" viewBox="0 0 21 15" fill="#555" className="ml-[32px] shrink-0">
                    <path d="M8 0v4c8 0 12 4 13 11-3-4-7-6-13-6v5L0 7z" />
                </svg>
                <span className="ml-[7px] flex"><Caret /></span>
                <svg width="21" height="15" viewBox="0 0 21 15" fill="#aaa" className="ml-[21px] shrink-0">
                    <path d="M13 0v4C5 4 1 8 0 15c3-4 7-6 13-6v5l8-7z" />
                </svg>
                <span className="ml-[7px] flex"><Caret c="border-t-[#999]" /></span>
                <div className="ml-auto flex h-full items-center">
                    <div className="flex h-[32px] w-[136px] items-center justify-center self-start bg-[#ffa41e] text-[13px] text-[#fff3dd]">
                        Subscribe Now
                    </div>
                    <svg width="21" height="19" viewBox="0 0 21 19" className="ml-[15px] shrink-0">
                        <path d="M0 0h21v14h-3v5l-5-5H0z" fill="#444" />
                        <path d="M3 4h15M3 7h15M3 10h11" stroke="#ddd" />
                    </svg>
                    <svg width="21" height="21" viewBox="0 0 21 21" fill="none" stroke="#444" strokeWidth="2" className="ml-[31px] shrink-0">
                        <circle cx="10.500" cy="10.500" r="9.300" />
                        <path d="M10.500 5v6h5" />
                    </svg>
                    <span className="ml-[35px] whitespace-nowrap text-[12.5px] text-[#555]">Robert Mitsakov</span>
                    <span className="ml-[6px] flex"><Caret /></span>
                    <div className="ml-[33px] flex h-[21px] w-[21px] items-center justify-center rounded-full bg-[#666] text-[15px] font-bold text-[#f0f0f0]">?</div>
                    <span className="ml-[5px] mr-[17px] flex"><Caret /></span>
                </div>
            </div>
            <div className="relative flex-1 overflow-hidden">
                <Canvas />
                <Ribbon />
                <Browser />
                <div className="absolute bottom-[6px] left-[6px] flex h-[30px] w-[374px] items-center border border-[#d0d0d0] bg-[#f0f0f0] pl-[29px] text-[12.5px] text-[#777]">
                    COMMENTS
                    <span className="ml-auto mr-[9px] flex h-[12px] w-[12px] items-center justify-center rounded-full bg-[#333] text-[11px] font-bold leading-none text-white">+</span>
                    <span className="mr-[2px] h-[12px] w-[3px] border-x border-[#aaa]" />
                </div>
                <NavBar />
            </div>
            <Timeline />
            <Taskbar />
        </div>
    );
}
